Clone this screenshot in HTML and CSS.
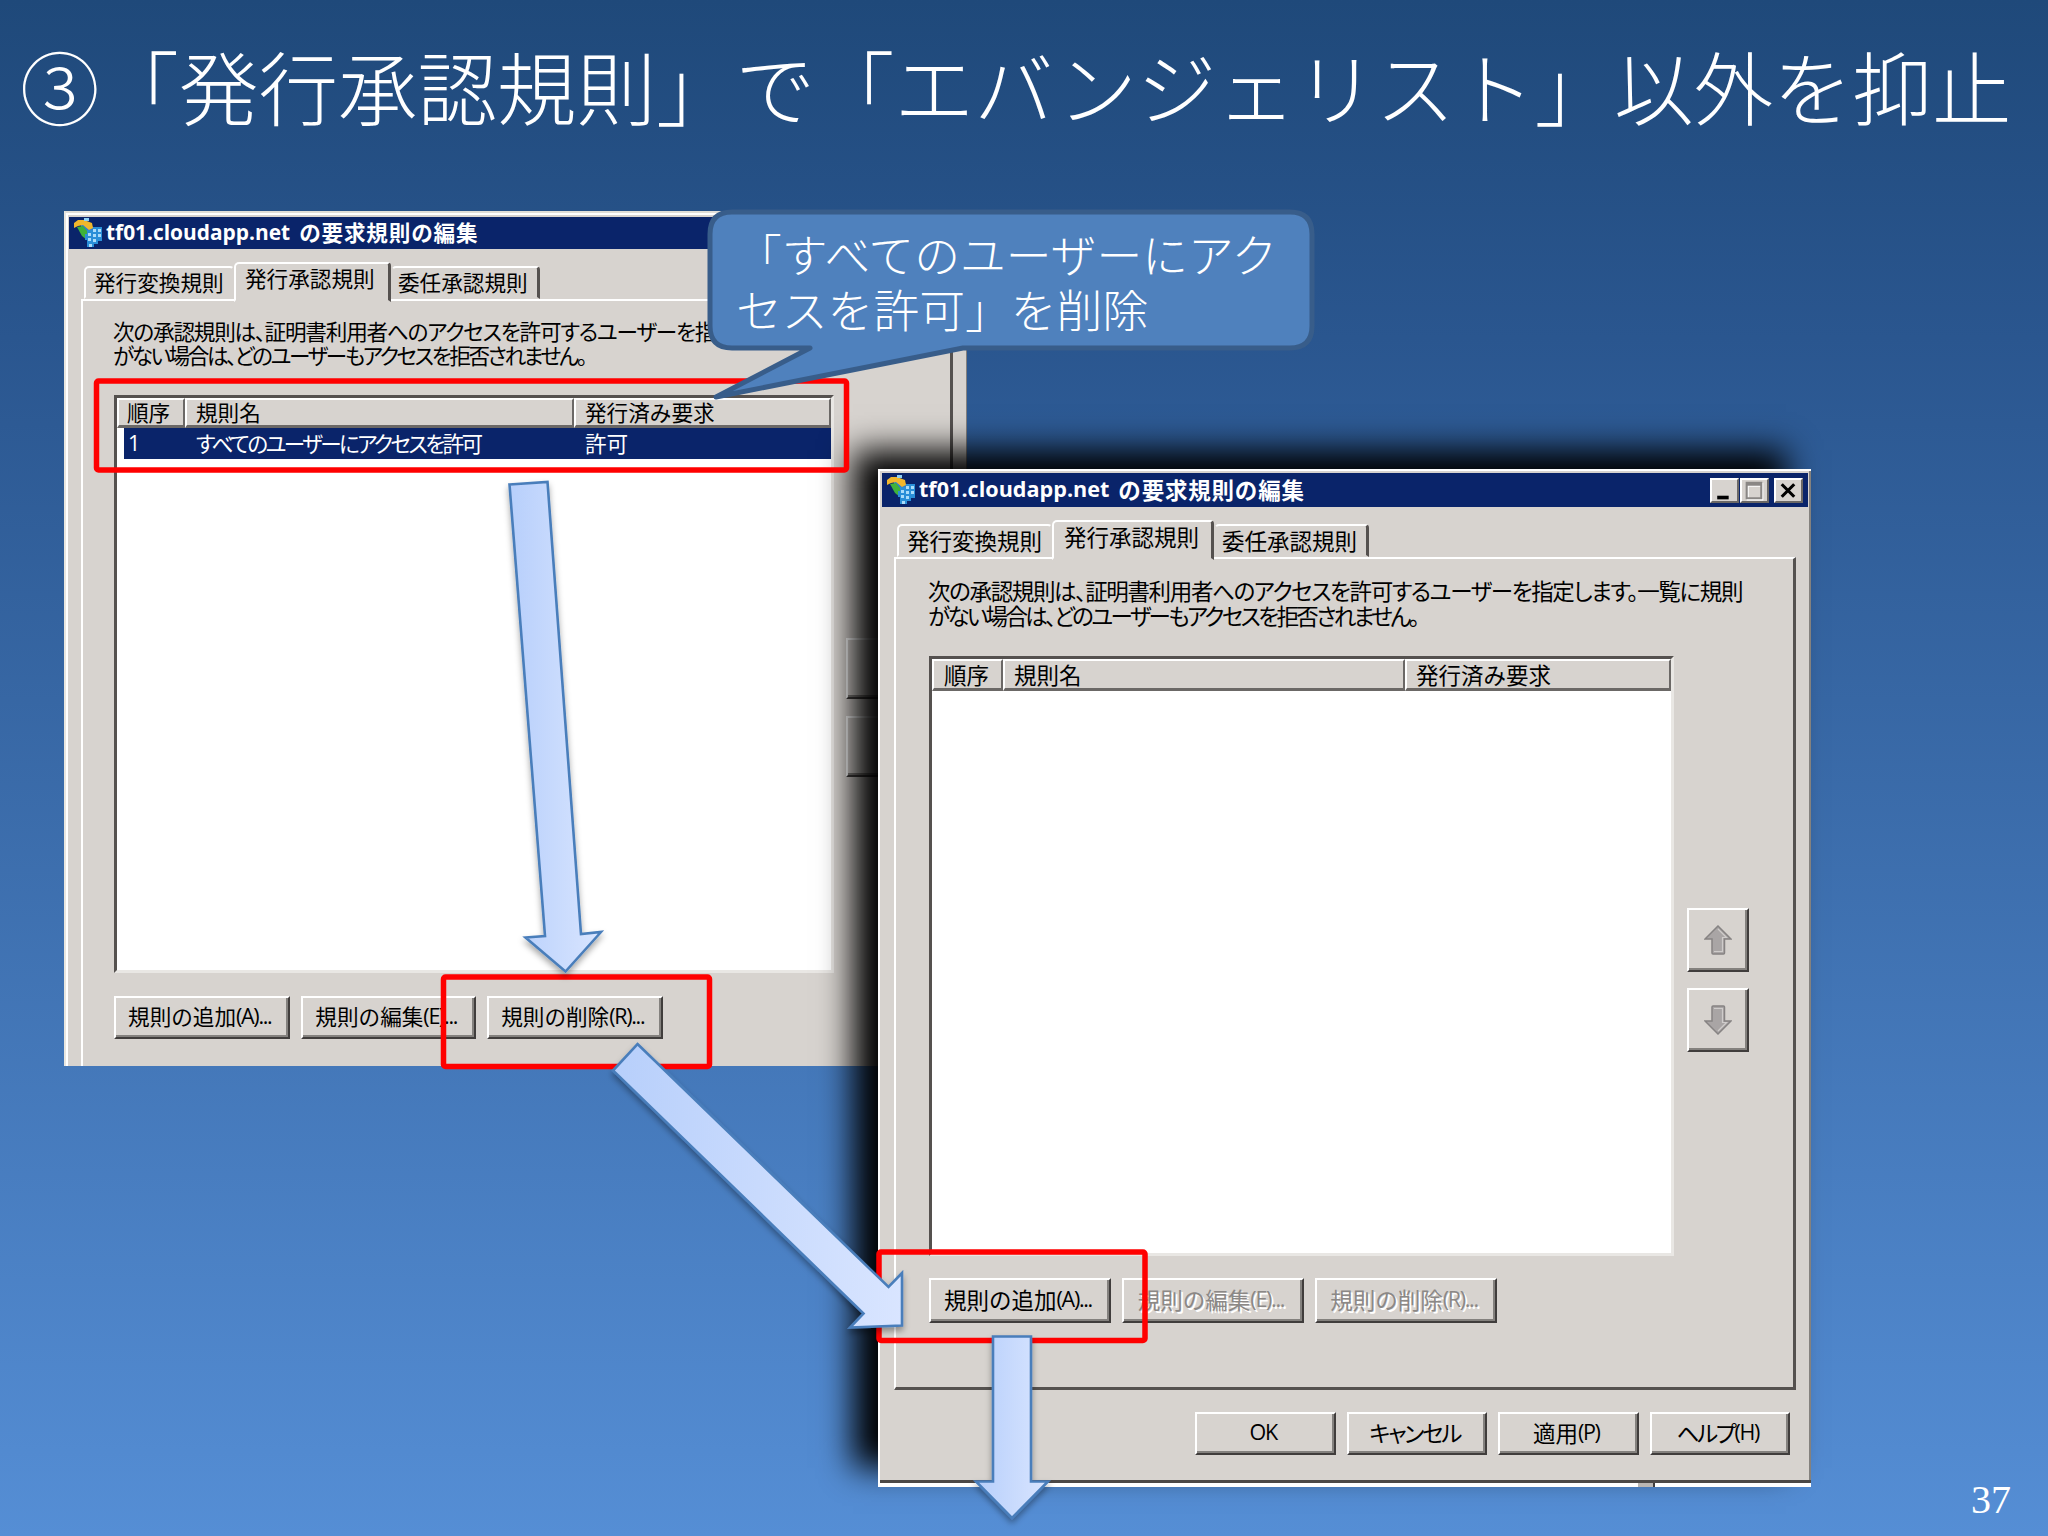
FILE: index.html
```html
<!DOCTYPE html>
<html lang="ja">
  <head>
    <meta charset="UTF-8" />
    <meta name="viewport" content="width=device-width, initial-scale=1.0" />
    <title>発行承認規則</title>
    <link rel="stylesheet" href="styles.css">
  </head>
  <body>
    <svg width="0" height="0" class="defs">
      <symbol id="app-icon" viewBox="0 0 30 30">
        <path d="M8 5 L14 4 L20 9 L20 14 L14 18 L8 12 Z" fill="#2f7fd0" />
        <path d="M1 10 L1 5 L5 2 L11 2 L19 5 L20 10 L16 12 L10 7 L5 8 Z" fill="#f2b72c" />
        <path d="M4 9 L10 8 L14 13 L14 22 L9 18 Z" fill="#3fb23a" />
        <path d="M11 0 h5 v3 h-5z" fill="#8fd0f5" />
        <path d="M14 12 h6 v-3 h9 v14 h-4 v3 h-4 v3 h-7 v-7 h-2 v-6 h2z" fill="#2a8fd8" />
        <path d="M20 11h3v3h-3zM25 11h3v3h-3zM20 16h3v3h-3zM25 16h3v3h-3zM15 15h3v3h-3zM15 20h3v3h-3zM16 26h3v3h-3zM20 21h3v3h-3z" fill="#a9dcfa" />
      </symbol>
      <symbol id="move-up" viewBox="0 0 28 30">
        <path d="M14 1 L27 14 H20.500 V28 Q20.500 29 19.500 29 H9 Q8 29 8 28 V14 H1 Z" fill="#a9a5a5" stroke="#868383" stroke-width="1.500" />
        <path d="M14 4 L22.500 12.500 H18.500 V26.500 H10" fill="none" stroke="#cfcccb" stroke-width="1.200" />
      </symbol>
    </svg>

    <div class="slide">
      <h1 class="slide-title">③「発行承認規則」で「エバンジェリスト」以外を抑止</h1>

      <div class="window window-back">
        <div class="titlebar">
          <svg class="app-icon"><use href="#app-icon" /></svg>
          <span class="caption"><span class="host">tf01.cloudapp.net</span> <span class="caption-jp">の要求規則の編集</span></span>
        </div>
        <div class="tabs">
          <div class="tab">発行変換規則</div>
          <div class="tab active">発行承認規則</div>
          <div class="tab">委任承認規則</div>
        </div>
        <div class="panel">
          <p class="desc">
            <span class="line1">次の承認規則は、証明書利用者へのアクセスを許可するユーザーを指</span>
            <span class="line2">がない場合は、どのユーザーもアクセスを拒否されません。</span>
          </p>
          <div class="list-row">
            <div class="list">
              <div class="list-head">
                <div>順序</div>
                <div>規則名</div>
                <div>発行済み要求</div>
              </div>
              <div class="list-item">
                <div>1</div>
                <div class="rule-name">すべてのユーザーにアクセスを許可</div>
                <div>許可</div>
              </div>
            </div>
            <div class="move">
              <div class="btn move-btn"></div>
              <div class="btn move-btn"></div>
            </div>
          </div>
          <div class="rule-buttons">
            <div class="btn">規則の追加<span class="key">(A)...</span></div>
            <div class="btn">規則の編集<span class="key">(E)...</span></div>
            <div class="btn">規則の削除<span class="key">(R)...</span></div>
          </div>
        </div>
      </div>

      <div class="window window-front">
        <div class="titlebar">
          <svg class="app-icon"><use href="#app-icon" /></svg>
          <span class="caption"><span class="host">tf01.cloudapp.net</span> <span class="caption-jp">の要求規則の編集</span></span>
          <div class="win-buttons">
            <div class="win-btn"><svg viewBox="0 0 24 20"><path d="M5 15h11v3.500H5z" /></svg></div>
            <div class="win-btn max"><svg viewBox="0 0 24 20"><path d="M4.500 2.500h14v15h-14z M4.500 4.500h14" fill="none" stroke="#fff" stroke-width="2" transform="translate(1 1)" /><path d="M4.500 2.500h14v15h-14z M4.500 4.500h14" fill="none" stroke="#8a8785" stroke-width="2" /></svg></div>
            <div class="win-btn close"><svg viewBox="0 0 24 20"><path d="M5.500 4 L17.500 16 M17.500 4 L5.500 16" fill="none" stroke="#000" stroke-width="3" /></svg></div>
          </div>
        </div>
        <div class="tabs">
          <div class="tab">発行変換規則</div>
          <div class="tab active">発行承認規則</div>
          <div class="tab">委任承認規則</div>
        </div>
        <div class="panel">
          <p class="desc">
            <span class="line1">次の承認規則は、証明書利用者へのアクセスを許可するユーザーを指定します。一覧に規則</span>
            <span class="line2">がない場合は、どのユーザーもアクセスを拒否されません。</span>
          </p>
          <div class="list-row">
            <div class="list">
              <div class="list-head">
                <div>順序</div>
                <div>規則名</div>
                <div>発行済み要求</div>
              </div>
            </div>
            <div class="move">
              <div class="btn move-btn"><svg><use href="#move-up" /></svg></div>
              <div class="btn move-btn down"><svg><use href="#move-up" /></svg></div>
            </div>
          </div>
          <div class="rule-buttons">
            <div class="btn">規則の追加<span class="key">(A)...</span></div>
            <div class="btn disabled">規則の編集<span class="key">(E)...</span></div>
            <div class="btn disabled">規則の削除<span class="key">(R)...</span></div>
          </div>
        </div>
        <div class="footer">
          <div class="btn"><span class="key">OK</span></div>
          <div class="btn"><span class="narrow">キャンセル</span></div>
          <div class="btn">適用<span class="key">(P)</span></div>
          <div class="btn"><span class="narrow">ヘルプ</span><span class="key">(H)</span></div>
        </div>
        <div class="edge"><i></i></div>
      </div>

      <!-- callout, highlight frames and arrows -->
      <svg class="overlay" viewBox="0 0 2048 1536">
        <defs>
          <linearGradient id="arrowFill" x1="0" x2="1" y1="0" y2="0">
            <stop offset="0" stop-color="#b7cffb" />
            <stop offset="1" stop-color="#d9e5ff" />
          </linearGradient>
          <filter id="soft" x="-30%" y="-10%" width="160%" height="125%">
            <feDropShadow dx="0" dy="4" stdDeviation="3" flood-color="#000" flood-opacity="0.35" />
          </filter>
        </defs>
        <g class="frame">
          <rect x="96.500" y="381" width="750" height="89" rx="2" />
          <rect x="443.500" y="977" width="266" height="89.500" rx="2" />
          <rect x="879" y="1252" width="266" height="88.500" rx="2" />
        </g>
        <path class="callout-shape" d="M732 212 H1290 Q1312 212 1312 234 V326 Q1312 348 1290 348 H963 L716 397 L810 348 H732 Q710 348 710 326 V234 Q710 212 732 212 Z" />
        <g class="arrow">
          <path d="M509.500 484.500 L547.500 482 L581 934 L601 932 L565.500 971.500 L525.500 937.500 L545 936 Z" />
          <path d="M637.500 1044 L888.500 1287 L902 1273 L902 1325.500 L850 1327.500 L863.500 1313.500 L613 1070.500 Z" />
          <path d="M993 1336.500 H1031 V1481.500 H1048 L1012 1518 L976 1481.500 H993 Z" />
        </g>
      </svg>
      <div class="callout-text">「すべてのユーザーにアク<br>セスを許可」を削除</div>
      <div class="page-number">37</div>
    </div>
  </body>
</html>
```
FILE: styles.css
```css
* {
  box-sizing: border-box;
}

body {
  margin: 0;
  font-family: "Noto Sans CJK JP", sans-serif;
}

.defs {
  position: absolute;
}

.slide {
  position: relative;
  width: 2048px;
  height: 1536px;
  overflow: hidden;
  background: linear-gradient(to bottom, #1f497a, #2a568f 22%, #558ed5);
}

.slide-title {
  margin: 0;
  padding: 33px 0 0 20px;
  font-size: 79.5px;
  line-height: 104px;
  font-weight: 200;
  color: #fff;
  white-space: nowrap;
}

/* dialogs */

.window {
  position: absolute;
  background: #d7d3cf;
  color: #000;
  white-space: nowrap;
  display: flex;
  flex-direction: column;
}

.window-back {
  left: 64px;
  top: 211px;
  width: 903px;
  height: 855px;
  overflow: hidden;
  font-size: 21.6px;
  border-left: 2px solid #e8e6e0;
  border-top: 2px solid #e0ded8;
  box-shadow: inset 2px 2px 0 #fff, inset -1px 0 0 #84817e;
}

.window-front {
  left: 878px;
  top: 469px;
  width: 933px;
  height: 1018px;
  font-size: 22.5px;
  border-left: 2px solid #fff;
  border-top: 2px solid #fff;
  box-shadow: -25px -19px 31px #000, inset -2px 0 0 #84817e;
}

.titlebar {
  display: flex;
  align-items: center;
  background: #0a246a;
  color: #fff;
  font-weight: 700;
  flex: none;
}

.window-back .titlebar {
  height: 32px;
  margin: 4px 0 0 3px;
  padding-left: 4px;
}

.window-front .titlebar {
  height: 34px;
  margin: 2px 3px 0 2px;
  padding: 0 5px 0 4px;
}

.app-icon {
  width: 30px;
  height: 30px;
  margin-right: 3px;
}

.caption {
  display: flex;
  gap: 9px;
  line-height: 28px;
  padding-bottom: 3px;
}

.host {
  font-family: "Open Sans", sans-serif;
  font-size: 20.9px;
}

.caption-jp {
  letter-spacing: 0.8px;
}

.window-front .host {
  font-size: 21.6px;
}

.win-buttons {
  display: flex;
  margin-left: auto;
}

.win-btn {
  width: 29px;
  height: 25px;
  background: #d7d3cf;
  border: 2px solid;
  border-color: #fff #6b6866 #6b6866 #fff;
}

.win-btn svg {
  display: block;
  width: 25px;
  height: 21px;
}

.win-btn.max {
  margin: 0 5px 0 1px;
}

.tabs {
  display: flex;
  align-items: flex-end;
  position: relative;
  z-index: 1;
  flex: none;
}

.tab {
  border: 2px solid;
  border-color: #fff transparent transparent #fff;
  border-radius: 5px 4px 0 0;
  line-height: 28px;
  padding-left: 8px;
  background: #d7d3cf;
}

.tab:last-child {
  border-left-color: transparent;
  border-right: 3px solid #55514f;
}

.tab.active {
  padding-left: 9px;
  border-right: 3px solid #55514f;
}

.window-back .tabs {
  height: 50px;
  padding-left: 18px;
}

.window-back .tab {
  width: 150px;
  height: 33px;
}

.window-back .tab.active {
  width: 157px;
  height: 40px;
  margin-bottom: -3px;
}

.window-back .tab:last-child {
  width: 149px;
  padding-left: 5px;
}

.window-front .tabs {
  height: 50px;
  padding-left: 17px;
}

.window-front .tab {
  width: 155px;
  height: 33px;
}

.window-front .tab.active {
  width: 162px;
  height: 40px;
  margin-bottom: -3px;
  padding-left: 10px;
}

.window-front .tab:last-child {
  width: 155px;
  padding-left: 6px;
}

.panel {
  border: 3px solid;
  border-color: #fff #55514f #55514f #fff;
  border-width: 2px 3px 3px 2px;
  flex: none;
}

.window-back .panel {
  width: 872px;
  height: 800px;
  margin-left: 15px;
  padding: 18px 0 0 31px;
}

.window-front .panel {
  width: 902px;
  height: 833px;
  margin-left: 14px;
  padding: 19px 0 0 33px;
}

.desc {
  margin: 0;
  font-feature-settings: "palt";
}

.desc span {
  display: block;
  margin-left: -1px;
}

.window-back .desc {
  line-height: 24px;
  height: 48px;
  margin-bottom: 28px;
}

.window-front .desc {
  line-height: 24.5px;
  height: 49px;
  margin-bottom: 29px;
}

.window-back .line1 {
  letter-spacing: -1.2px;
}

.window-back .line2 {
  letter-spacing: -2.4px;
}

.window-front .line1 {
  letter-spacing: -1.35px;
}

.window-front .line2 {
  letter-spacing: -2.6px;
}

.list-row {
  display: flex;
}

.list {
  background: #fff;
  border: 3px solid;
  border-color: #55514f #e9e7e4 #e9e7e4 #55514f;
  flex: none;
}

.list-head,
.list-item {
  display: flex;
}

.list-head > div {
  background: #d7d3cf;
  border: 2px solid;
  border-color: #fff #6b6866 #6b6866 #fff;
  border-bottom-width: 3px;
}

.window-back .list {
  width: 720px;
  height: 578px;
}

.window-back .list-head {
  height: 30px;
  line-height: 24px;
}

.window-back .list-head > div:nth-child(1) {
  width: 68px;
  padding-left: 8px;
}

.window-back .list-head > div:nth-child(2) {
  width: 389px;
  padding-left: 9px;
}

.window-back .list-head > div:nth-child(3) {
  flex: 1;
  padding-left: 9px;
}

.list-item {
  background: #0a246a;
  color: #fff;
  margin-left: 7px;
  height: 31px;
  line-height: 29px;
}

.list-item > div:nth-child(1) {
  width: 72px;
  padding-left: 4px;
  font-family: "Open Sans", sans-serif;
}

.list-item > div:nth-child(2) {
  width: 389px;
}

.rule-name {
  font-feature-settings: "palt";
  letter-spacing: -2.6px;
}

.window-front .list {
  width: 745px;
  height: 600px;
}

.window-front .list-head {
  height: 32px;
  line-height: 27px;
}

.window-front .list-head > div:nth-child(1) {
  width: 71px;
  padding-left: 10px;
}

.window-front .list-head > div:nth-child(2) {
  width: 402px;
  padding-left: 9px;
}

.window-front .list-head > div:nth-child(3) {
  flex: 1;
  padding-left: 9px;
}

.btn {
  display: flex;
  align-items: center;
  justify-content: center;
  border: 2px solid;
  border-color: #fff #403d3c #403d3c #fff;
  box-shadow: inset -2px -2px 0 #84817e;
  line-height: 30px;
  padding: 0 4px 3px 0;
}

.btn.disabled {
  color: #8b8886;
  text-shadow: 2px 2px 0 #fff;
}

.key {
  font-family: "Open Sans", sans-serif;
  font-size: 21.5px;
  letter-spacing: -1.3px;
}

.move-btn {
  padding: 0;
}

.move-btn svg {
  width: 28px;
  height: 30px;
}

.move-btn.down svg {
  transform: scaleY(-1);
}

.window-back .move {
  padding: 243px 0 0 12px;
}

.window-back .move-btn {
  width: 60px;
  height: 61px;
  margin-bottom: 17px;
}

.window-front .move {
  padding: 252px 0 0 13px;
}

.window-front .move-btn {
  width: 62px;
  height: 64px;
  margin-bottom: 16px;
}

.rule-buttons {
  display: flex;
}

.window-back .rule-buttons {
  padding-top: 23px;
  gap: 11px;
}

.window-back .rule-buttons .btn {
  width: 175.5px;
  height: 43px;
}

.window-front .rule-buttons {
  padding-top: 22px;
  gap: 11px;
}

.window-front .rule-buttons .btn {
  width: 182px;
  height: 45px;
}

.footer {
  display: flex;
  gap: 11px;
  justify-content: flex-end;
  padding: 22px 21px 0 0;
  flex: none;
}

.footer .btn {
  width: 140.5px;
  height: 43px;
}

.narrow {
  font-feature-settings: "palt";
  letter-spacing: -2.2px;
}

.edge {
  margin-top: auto;
  height: 7px;
  background: #fff;
  border-top: 3px solid #4b4846;
  display: flex;
}

.edge i {
  width: 17px;
  margin-left: 758px;
  background: #b9b6b3;
  border-right: 2px solid #403d3c;
}

/* annotations */

.overlay {
  position: absolute;
  left: 0;
  top: 0;
  width: 2048px;
  height: 1536px;
}

.frame {
  fill: none;
  stroke: #f00;
  stroke-width: 5.5;
}

.callout-shape {
  fill: #4f81bd;
  stroke: #385d8a;
  stroke-width: 5;
  stroke-linejoin: round;
}

.arrow {
  fill: url(#arrowFill);
  stroke: #4a7ebb;
  stroke-width: 2.6;
  filter: url(#soft);
}

.callout-text {
  position: absolute;
  left: 736px;
  top: 226px;
  font-size: 45.8px;
  line-height: 55px;
  font-weight: 200;
  color: #fff;
  white-space: nowrap;
}

.page-number {
  position: absolute;
  right: 37px;
  bottom: 13px;
  font-family: "Liberation Serif", serif;
  font-size: 40px;
  line-height: 46px;
  color: #fff;
}
```
